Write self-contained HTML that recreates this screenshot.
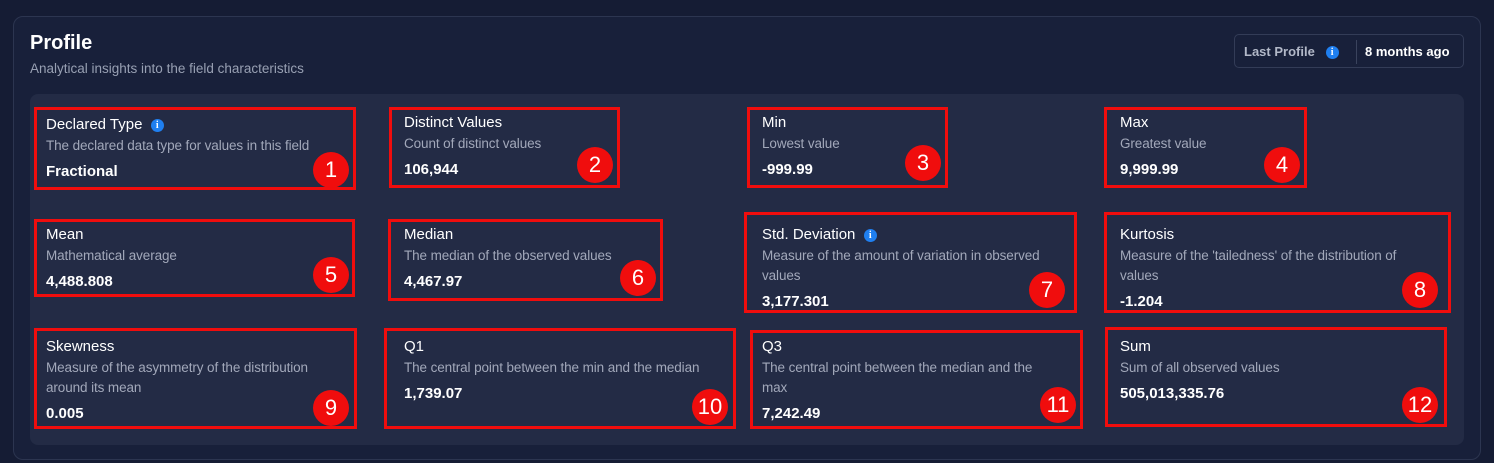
<!DOCTYPE html>
<html><head><meta charset="utf-8"><style>
*{margin:0;padding:0;box-sizing:border-box}
body{width:1494px;height:463px;background:#151c34;font-family:"Liberation Sans",sans-serif;position:relative;overflow:hidden;color:#fff}
.card{position:absolute;left:13px;top:16px;width:1468px;height:444px;background:#18203a;border:1px solid #2c3550;border-radius:10px}
.panel{position:absolute;left:30px;top:94px;width:1434px;height:351px;background:#232b45;border-radius:8px}
.h{position:absolute;left:30px;top:32px;font-size:20px;font-weight:bold}
.sub{position:absolute;left:30px;top:61px;font-size:13.5px;color:#98a0b3}
.lp{position:absolute;left:1234px;top:34px;width:230px;height:34px;border:1px solid #333c57;border-radius:5px;font-size:13px}
.lp .a{position:absolute;left:9px;top:9px;color:#b2b8c8;font-weight:bold}
.lp .sep{position:absolute;left:121px;top:5px;width:1px;height:24px;background:#3a435d}
.lp .b{position:absolute;left:130px;top:9px;font-weight:bold}
.i{display:inline-block;width:13px;height:13px;border-radius:50%;background:#1f7ff0;color:#fff;font-size:10px;font-weight:bold;text-align:center;line-height:13px;font-family:"Liberation Serif",serif;vertical-align:1px}
.box{position:absolute;border:3px solid #f00d0d}
.it{position:absolute}
.it .t{font-size:15px;height:20px;line-height:20px}
.it .d{font-size:13.5px;color:#a2a8ba;line-height:20px;margin-top:1px;letter-spacing:-0.1px}
.it .v{font-size:15px;font-weight:bold;line-height:20px;margin-top:6px}
.n{position:absolute;width:36px;height:36px;border-radius:50%;background:#f00d0d;color:#fff;font-size:22px;text-align:center;line-height:36px;margin:-18px 0 0 -18px}
</style></head><body>
<div class="card"></div>
<div class="h">Profile</div>
<div class="sub">Analytical insights into the field characteristics</div>
<div class="lp"><span class="a">Last Profile &nbsp; <span class="i">i</span></span><span class="sep"></span><span class="b">8 months ago</span></div>
<div class="panel"></div>

<div class="box" style="left:34px;top:107px;width:322px;height:83px"></div>
<div class="box" style="left:389px;top:107px;width:231px;height:81px"></div>
<div class="box" style="left:747px;top:107px;width:201px;height:81px"></div>
<div class="box" style="left:1104px;top:107px;width:203px;height:81px"></div>
<div class="box" style="left:34px;top:219px;width:321px;height:78px"></div>
<div class="box" style="left:388px;top:219px;width:275px;height:82px"></div>
<div class="box" style="left:744px;top:212px;width:333px;height:101px"></div>
<div class="box" style="left:1104px;top:212px;width:347px;height:101px"></div>
<div class="box" style="left:34px;top:328px;width:323px;height:101px"></div>
<div class="box" style="left:384px;top:328px;width:352px;height:101px"></div>
<div class="box" style="left:750px;top:330px;width:333px;height:99px"></div>
<div class="box" style="left:1105px;top:327px;width:342px;height:100px"></div>

<div class="it" style="left:46px;top:115px"><div class="t">Declared Type &nbsp;<span class="i">i</span></div><div class="d">The declared data type for values in this field</div><div class="v">Fractional</div></div>
<div class="it" style="left:404px;top:113px"><div class="t">Distinct Values</div><div class="d">Count of distinct values</div><div class="v">106,944</div></div>
<div class="it" style="left:762px;top:113px"><div class="t">Min</div><div class="d">Lowest value</div><div class="v">-999.99</div></div>
<div class="it" style="left:1120px;top:113px"><div class="t">Max</div><div class="d">Greatest value</div><div class="v">9,999.99</div></div>

<div class="it" style="left:46px;top:225px"><div class="t">Mean</div><div class="d">Mathematical average</div><div class="v">4,488.808</div></div>
<div class="it" style="left:404px;top:225px"><div class="t">Median</div><div class="d">The median of the observed values</div><div class="v">4,467.97</div></div>
<div class="it" style="left:762px;top:225px"><div class="t">Std. Deviation &nbsp;<span class="i">i</span></div><div class="d">Measure of the amount of variation in observed<br>values</div><div class="v">3,177.301</div></div>
<div class="it" style="left:1120px;top:225px"><div class="t">Kurtosis</div><div class="d">Measure of the 'tailedness' of the distribution of<br>values</div><div class="v">-1.204</div></div>

<div class="it" style="left:46px;top:337px"><div class="t">Skewness</div><div class="d">Measure of the asymmetry of the distribution<br>around its mean</div><div class="v">0.005</div></div>
<div class="it" style="left:404px;top:337px"><div class="t">Q1</div><div class="d">The central point between the min and the median</div><div class="v">1,739.07</div></div>
<div class="it" style="left:762px;top:337px"><div class="t">Q3</div><div class="d">The central point between the median and the<br>max</div><div class="v">7,242.49</div></div>
<div class="it" style="left:1120px;top:337px"><div class="t">Sum</div><div class="d">Sum of all observed values</div><div class="v">505,013,335.76</div></div>

<div class="n" style="left:331px;top:170px">1</div>
<div class="n" style="left:595px;top:165px">2</div>
<div class="n" style="left:923px;top:163px">3</div>
<div class="n" style="left:1282px;top:165px">4</div>
<div class="n" style="left:331px;top:275px">5</div>
<div class="n" style="left:638px;top:278px">6</div>
<div class="n" style="left:1047px;top:290px">7</div>
<div class="n" style="left:1420px;top:290px">8</div>
<div class="n" style="left:331px;top:408px">9</div>
<div class="n" style="left:710px;top:407px">10</div>
<div class="n" style="left:1058px;top:405px">11</div>
<div class="n" style="left:1420px;top:405px">12</div>
</body></html>
